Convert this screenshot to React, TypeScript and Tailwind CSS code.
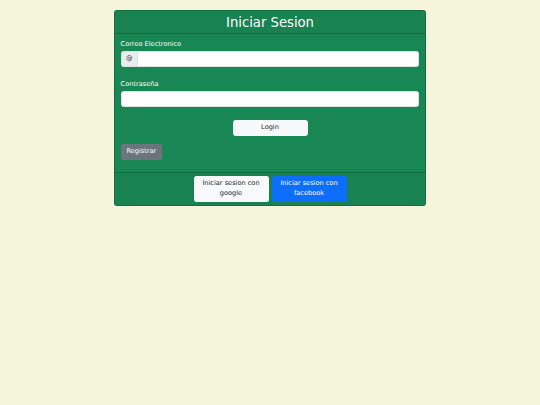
import React from "react";

const font = { fontFamily: '"DejaVu Sans", "Liberation Sans", sans-serif' };

export default function App() {
  return (
    <div className="min-h-screen bg-[#f5f5dc] pt-[10px]" style={font}>
      <div className="mx-auto w-[312px] rounded-[3px] border border-black/[.175] bg-[#198754] text-white">
        {/* Header */}
        <div className="border-b border-black/[.175] bg-black/[.03] px-[6.6px] pt-[3.8px] pb-[2.2px] text-center">
          <h2 className="text-[13.2px] leading-[15.8px] font-normal">Iniciar Sesion</h2>
        </div>

        {/* Body */}
        <div className="px-[5.6px] pt-[6px] pb-[12.6px]">
          <label className="block text-[6.6px] leading-[9.9px] mb-[1.2px]">Correo Electronico</label>
          <div className="flex h-[15.7px] rounded-[2.5px] overflow-hidden border-[0.5px] border-[#dee2e6] bg-white">
            <span className="flex w-[16.6px] items-center justify-center bg-[#e9ecef] border-r-[0.5px] border-[#dee2e6] text-[6.6px] text-[#212529]">
              @
            </span>
            <input className="flex-1 min-w-0 bg-white px-[5px] text-[6.6px] text-[#212529] outline-none" />
          </div>

          <label className="mt-[13.3px] block text-[6.6px] leading-[9.9px] mb-[1.2px]">Contraseña</label>
          <input
            type="password"
            className="block h-[15.7px] w-full rounded-[2.5px] border-[0.5px] border-[#dee2e6] bg-white px-[5px] text-[6.6px] text-[#212529] outline-none"
          />

          <div className="mt-[13.3px] flex justify-center">
            <button className="h-[15.7px] w-[75px] rounded-[2.5px] border-[0.5px] border-[#f8f9fa] bg-[#f8f9fa] text-[6.6px] leading-[9.9px] text-[#212529]">
              Login
            </button>
          </div>

          <button className="mt-[5px] h-[15.9px] rounded-[2.5px] bg-[#6c757d] px-[5.8px] text-[6.6px] leading-[9.9px] text-white">
            Registrar
          </button>
        </div>

        {/* Footer */}
        <div className="flex justify-center gap-[3px] border-t border-black/[.175] bg-black/[.03] px-[6.6px] py-[3px]">
          <button className="h-[25.8px] w-[75px] rounded-[2.5px] bg-[#f8f9fa] px-[4px] text-[6.6px] leading-[9.9px] text-[#212529]">
            Iniciar sesion con google
          </button>
          <button className="h-[25.8px] w-[75px] rounded-[2.5px] bg-[#0d6efd] px-[4px] text-[6.6px] leading-[9.9px] text-white">
            Iniciar sesion con facebook
          </button>
        </div>
      </div>
    </div>
  );
}
